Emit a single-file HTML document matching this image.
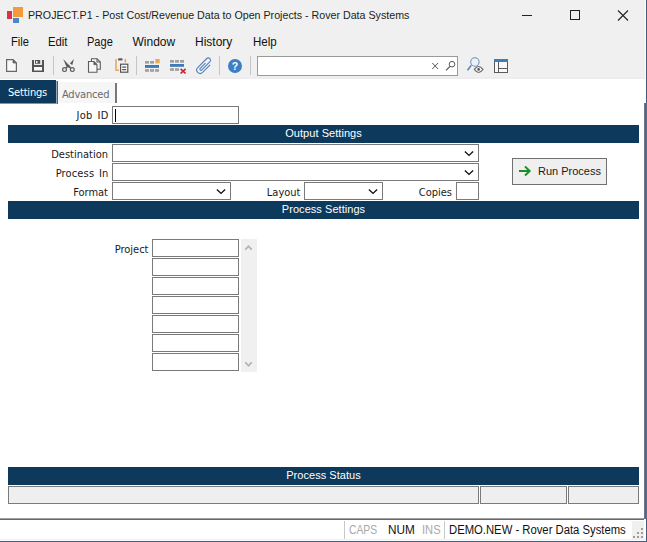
<!DOCTYPE html>
<html lang="en">
<head>
<meta charset="utf-8">
<title>PROJECT.P1 - Post Cost/Revenue Data to Open Projects - Rover Data Systems</title>
<style>
html,body{margin:0;padding:0;}
body{width:647px;height:542px;overflow:hidden;background:#fff;position:relative;font-family:"Liberation Sans",sans-serif;color:#1a1a1a;}
.abs,.t,.box,.bar,.sel,.sbox{position:absolute;box-sizing:border-box;}
.t{white-space:nowrap;line-height:1;transform-origin:0 0;}
#chrome{position:absolute;left:0;top:0;width:647px;height:77px;background:#f0f0f0;border-bottom:2px solid #ededed;}
.title{font-size:11.5px;left:27.6px;top:10px;color:#1c1c1c;transform:scaleX(0.928);}
.menu{font-size:12px;top:36px;color:#111;}
.bar{left:8px;width:631px;height:18px;background:#0d395c;color:#fff;font-size:11px;text-align:center;line-height:17px;letter-spacing:0.05px;}
.lbl{font-family:"DejaVu Sans Condensed","DejaVu Sans","Liberation Sans",sans-serif;font-size:11px;color:#1a1a1a;text-align:right;}
.box{border:1px solid #7a7a7a;background:#fff;}
.sbox{border:1px solid #7a7a7a;background:#efefef;height:18px;top:486px;}
.sel{border:1px solid #7a7a7a;background:#fff;height:18px;}
.sel svg{position:absolute;right:4.500px;top:5.700px;}
.status{font-size:12px;top:524px;color:#111;}
</style>
</head>
<body>
<!-- window chrome -->
<div id="chrome"></div>

<!-- app icon -->
<div class="abs" style="left:13px;top:7px;width:10px;height:10px;background:#f39a3d;"></div>
<div class="abs" style="left:7px;top:11px;width:5px;height:8px;background:#d8354a;"></div>
<div class="abs" style="left:13px;top:18px;width:6px;height:5px;background:#4a86c8;"></div>
<div class="t title">PROJECT.P1 - Post Cost/Revenue Data to Open Projects - Rover Data Systems</div>

<!-- window controls -->
<svg class="abs" style="left:515px;top:5px" width="125" height="22" viewBox="0 0 125 22">
  <path d="M7 10.5h10" stroke="#222" stroke-width="1" fill="none"/>
  <rect x="55.5" y="5.5" width="9" height="9" stroke="#222" stroke-width="1" fill="none"/>
  <path d="M103 5.5l10 10M113 5.5l-10 10" stroke="#222" stroke-width="1.1" fill="none"/>
</svg>

<!-- menu -->
<div class="t menu" style="left:11px;transform:scaleX(.93)">File</div>
<div class="t menu" style="left:48px;transform:scaleX(.94)">Edit</div>
<div class="t menu" style="left:87px;transform:scaleX(.92)">Page</div>
<div class="t menu" style="left:132.5px">Window</div>
<div class="t menu" style="left:195px">History</div>
<div class="t menu" style="left:252.5px;transform:scaleX(.96)">Help</div>

<!-- toolbar -->
<div class="abs" style="left:257px;top:56px;width:201px;height:20px;border:1px solid #9a9a9a;background:#fff;box-sizing:border-box;"></div>
<svg id="tb" class="abs" style="left:0;top:54px" width="647" height="25" viewBox="0 54 647 25">
  <!-- separators -->
  <g stroke="#c6c6c6" stroke-width="1">
    <path d="M53.5 56v19M136.5 56v19M219.5 56v19M250.5 56v19"/>
  </g>
  <!-- new -->
  <path d="M6.600 59.600h6.400l3.400 3.400v8.400h-9.800z" fill="#f8f8f8" stroke="#686868" stroke-width="1.200"/>
  <path d="M13 59.600v3.400h3.400z" fill="#686868" stroke="#686868" stroke-width="0.800"/>
  <!-- save -->
  <rect x="32" y="60" width="12" height="12" fill="#555"/>
  <rect x="34" y="60" width="8" height="5" fill="#ececec"/>
  <rect x="35" y="60" width="5.200" height="3.800" fill="#555"/>
  <rect x="36" y="61" width="1.500" height="2.200" fill="#f0f0f0"/>
  <rect x="34" y="67" width="8" height="3.500" fill="#fafafa"/>
  <!-- scissors -->
  <g fill="none" stroke="#5a5a5a" stroke-width="1.200">
    <circle cx="64.500" cy="69.600" r="1.900"/>
    <circle cx="72.300" cy="69.600" r="1.900"/>
    <path d="M69.300 65.200L66 68"/>
  </g>
  <path d="M63.200 58.900L71.200 67.600L70 68.200L66.300 66.600L65.200 63.800Z" fill="#5a5a5a"/>
  <path d="M73.900 58.900L72.300 64.900L69.900 63.600Z" fill="#5a5a5a"/>
  <!-- copy -->
  <g fill="#f6f6f6" stroke="#5c5c5c" stroke-width="1.100">
    <path d="M91.500 58.700h5.500l3.300 3.300v7.300h-8.800z"/>
    <path d="M97 58.700v3.300h3.300" fill="none"/>
    <path d="M88.500 61.500h5.300l3.200 3.200v7.500h-8.500z"/>
  </g>
  <path d="M93.800 61.500l3.200 3.200h-3.200z" fill="#5c5c5c" stroke="#5c5c5c" stroke-width="0.600"/>
  <!-- paste -->
  <path d="M116 59v11.300h3" fill="none" stroke="#e9a45a" stroke-width="1.500"/>
  <path d="M125.300 59v3.500" fill="none" stroke="#e9a45a" stroke-width="1.500"/>
  <rect x="118" y="58.200" width="4.600" height="2.400" rx="0.800" fill="#606060"/>
  <rect x="120.600" y="64.200" width="7.200" height="8" fill="#fcfcfc" stroke="#555" stroke-width="1.200"/>
  <path d="M122.200 67.100h4M122.200 69.600h4" stroke="#555" stroke-width="1.200"/>
  <!-- insert row -->
  <g fill="#a0a0a0">
    <rect x="145" y="61" width="4" height="2.600"/><rect x="150" y="61" width="4" height="2.600"/>
    <rect x="145" y="69.100" width="4" height="2.700"/><rect x="150" y="69.100" width="4" height="2.700"/><rect x="155" y="69.100" width="4" height="2.700"/>
  </g>
  <rect x="155.300" y="59" width="4.400" height="4.300" fill="#f0a850"/>
  <rect x="145" y="65" width="14" height="2.900" fill="#3d7ab6"/>
  <!-- delete row -->
  <g fill="#a0a0a0">
    <rect x="170" y="60" width="4" height="2.700"/><rect x="175" y="60" width="4" height="2.700"/><rect x="180" y="60" width="4" height="2.700"/>
    <rect x="170" y="68.200" width="4" height="2.700"/><rect x="175" y="68.200" width="4" height="2.700"/>
  </g>
  <rect x="170" y="64" width="14" height="2.800" fill="#3d7ab6"/>
  <path d="M180.600 68.800l5 4.700M185.600 68.800l-5 4.700" stroke="#c4243a" stroke-width="1.700" fill="none"/>
  <!-- paperclip -->
  <g transform="translate(204.300 65.800) rotate(-45)">
    <path d="M-5.900 3.400A3.400 3.400 0 0 1 -5.900 -3.400L6.900 -3.400A2.270 2.270 0 0 1 6.900 1.130L-5.900 3.400Z" fill="#edf3f9" stroke="none"/>
    <path d="M4.800 3.400L-5.900 3.400A3.400 3.400 0 0 1 -5.900 -3.400L6.900 -3.400A2.270 2.270 0 0 1 6.900 1.130L-4.700 1.130A1.130 1.130 0 0 1 -4.700 -1.130L2.800 -1.130" fill="none" stroke="#5681b3" stroke-width="1.100"/>
  </g>
  <!-- help -->
  <circle cx="235" cy="66" r="7" fill="#3d7ec4"/>
  <text x="235" y="69.800" text-anchor="middle" font-family="Liberation Sans, sans-serif" font-weight="bold" font-size="10.500" fill="#fff">?</text>
  <!-- search box icons -->
  <path d="M432.300 63l5.800 6M438.100 63l-5.800 6" stroke="#555" stroke-width="1" fill="none"/>
  <circle cx="452" cy="64.200" r="2.800" fill="none" stroke="#555" stroke-width="1"/>
  <path d="M450 66.300l-4 4" stroke="#555" stroke-width="1.200" fill="none"/>
  <!-- search eye -->
  <circle cx="474.900" cy="62" r="4.200" fill="none" stroke="#6690c4" stroke-width="1.050"/>
  <path d="M471.200 65.400l-3.700 4.900" stroke="#4f7fb8" stroke-width="1.500" fill="none"/>
  <path d="M474.300 69.400Q478.600 63.400 483 69.400Q478.600 75.400 474.300 69.400Z" fill="#f4f4f4" stroke="#686868" stroke-width="1.050"/>
  <circle cx="478.600" cy="69.400" r="1.300" fill="#555"/>
  <!-- layout -->
  <rect x="494.500" y="59.500" width="13" height="13" fill="#f8f8f8" stroke="#5a5a5a" stroke-width="1"/>
  <rect x="494" y="59" width="14" height="3" fill="#3f7db8"/>
  <path d="M498.500 62v10.500M498.500 68.500h9.500" stroke="#5a5a5a" stroke-width="1" fill="none"/>
</svg>

<!-- tabs -->
<div class="abs" style="left:0;top:80px;width:56px;height:23px;background:#0d395c;"></div>
<div class="abs" style="left:0;top:103px;width:56px;height:1px;background:#8094a8;"></div>
<div class="abs" style="left:56px;top:81px;width:1px;height:23px;background:#9aa7b5;"></div>
<div class="abs" style="left:57px;top:81px;width:1px;height:23px;background:#5c5c5c;"></div>
<div class="t lbl" style="left:8px;top:87px;color:#fff;text-align:left;letter-spacing:-0.2px;">Settings</div>
<div class="abs" style="left:58px;top:82px;width:57px;height:21px;background:#f6f6f6;"></div>
<div class="t lbl" style="left:62px;top:89px;color:#6a6a6a;text-align:left;letter-spacing:-0.2px;">Advanced</div>
<div class="abs" style="left:115px;top:83px;width:2px;height:20px;background:#787878;"></div>

<!-- Job ID -->
<div class="t lbl" style="left:39.500px;width:69px;top:110px;word-spacing:1.500px;letter-spacing:0.250px;">Job ID</div>
<div class="box" style="left:112px;top:106px;width:127px;height:18px;"></div>
<div class="abs" style="left:115px;top:109px;width:1px;height:13px;background:#000;"></div>

<!-- Output Settings -->
<div class="bar" style="top:125px;">Output Settings</div>
<div class="t lbl" style="left:19px;width:89px;top:149px;">Destination</div>
<div class="sel" style="left:112px;top:144px;width:367px;"><svg width="10" height="6" viewBox="0 0 10 6"><path d="M0.900 0.600L5 4.400L9.100 0.600" stroke="#111" stroke-width="1.400" fill="none"/></svg></div>
<div class="t lbl" style="left:19.500px;width:89px;top:168px;word-spacing:1.500px;letter-spacing:0.150px;">Process In</div>
<div class="sel" style="left:112px;top:163px;width:367px;"><svg width="10" height="6" viewBox="0 0 10 6"><path d="M0.900 0.600L5 4.400L9.100 0.600" stroke="#111" stroke-width="1.400" fill="none"/></svg></div>
<div class="t lbl" style="left:19px;width:89px;top:187px;">Format</div>
<div class="sel" style="left:112px;top:182px;width:119px;"><svg width="10" height="6" viewBox="0 0 10 6"><path d="M0.900 0.600L5 4.400L9.100 0.600" stroke="#111" stroke-width="1.400" fill="none"/></svg></div>
<div class="t lbl" style="left:239.500px;width:61px;top:187px;">Layout</div>
<div class="sel" style="left:304px;top:182px;width:79px;"><svg width="10" height="6" viewBox="0 0 10 6"><path d="M0.900 0.600L5 4.400L9.100 0.600" stroke="#111" stroke-width="1.400" fill="none"/></svg></div>
<div class="t lbl" style="left:399px;width:53px;top:187px;">Copies</div>
<div class="box" style="left:456px;top:182px;width:23px;height:18px;"></div>

<!-- Run Process button -->
<div class="abs" style="left:512px;top:158px;width:95px;height:27px;border:1px solid #707070;background:#efefef;"></div>
<svg class="abs" style="left:518px;top:165px" width="14" height="12" viewBox="0 0 14 12"><path d="M1 6h10.5M7 1.5L11.7 6L7 10.5" stroke="#17902b" stroke-width="1.9" fill="none"/></svg>
<div class="t" style="left:538px;top:166px;font-size:11px;color:#1a1a1a;">Run Process</div>

<!-- Process Settings -->
<div class="bar" style="top:201px;">Process Settings</div>
<div class="t lbl" style="left:79.500px;width:69px;top:244px;">Project</div>
<div class="box" style="left:152px;top:239px;width:87px;height:18px;"></div>
<div class="box" style="left:152px;top:258px;width:87px;height:18px;"></div>
<div class="box" style="left:152px;top:277px;width:87px;height:18px;"></div>
<div class="box" style="left:152px;top:296px;width:87px;height:18px;"></div>
<div class="box" style="left:152px;top:315px;width:87px;height:18px;"></div>
<div class="box" style="left:152px;top:334px;width:87px;height:18px;"></div>
<div class="box" style="left:152px;top:353px;width:87px;height:18px;"></div>
<div class="abs" style="left:241px;top:239px;width:16px;height:133px;background:#f0f0f0;"></div>
<svg class="abs" style="left:243px;top:243px" width="11" height="9" viewBox="0 0 11 9"><path d="M2.300 6.800L5.500 3.200L8.700 6.800" stroke="#b2b2b2" stroke-width="1.700" fill="none"/></svg>
<svg class="abs" style="left:243px;top:359px" width="11" height="9" viewBox="0 0 11 9"><path d="M2.300 3.200L5.500 6.800L8.700 3.200" stroke="#b2b2b2" stroke-width="1.700" fill="none"/></svg>

<!-- Process Status -->
<div class="bar" style="top:467px;">Process Status</div>
<div class="sbox" style="left:8px;width:471px;"></div>
<div class="sbox" style="left:480px;width:87px;"></div>
<div class="sbox" style="left:568px;width:71px;"></div>

<!-- status bar -->
<div class="abs" style="left:0;top:518px;width:644px;height:1px;background:#a0a0a0;"></div>
<div class="abs" style="left:0;top:519px;width:644px;height:1px;background:#696969;"></div>
<div class="abs" style="left:344px;top:521px;width:1px;height:18px;background:#c8c8c8;"></div>
<div class="abs" style="left:444px;top:521px;width:1px;height:18px;background:#c8c8c8;"></div>
<div class="t status" style="left:349px;color:#a8a8a8;transform:scaleX(.86)">CAPS</div>
<div class="t status" style="left:388px;transform:scaleX(.98)">NUM</div>
<div class="t status" style="left:422px;color:#a8a8a8;transform:scaleX(.93)">INS</div>
<div class="t status" style="left:449px;transform:scaleX(.94)">DEMO.NEW - Rover Data Systems</div>
<div class="abs" style="left:632px;top:521px;width:12px;height:19px;background:#f0f0f0;"></div>
<svg class="abs" style="left:632px;top:527px" width="12" height="12" viewBox="0 0 12 12" fill="#9c9c9c">
  <rect x="9" y="1" width="2" height="2"/>
  <rect x="5" y="5" width="2" height="2"/><rect x="9" y="5" width="2" height="2"/>
  <rect x="1" y="9" width="2" height="2"/><rect x="5" y="9" width="2" height="2"/><rect x="9" y="9" width="2" height="2"/>
</svg>

<!-- window right / bottom edges -->
<div class="abs" style="left:645px;top:0;width:1px;height:103px;background:#f3fdff;"></div>
<div class="abs" style="left:644px;top:103px;width:1px;height:416px;background:#6b7a82;"></div>
<div class="abs" style="left:645px;top:103px;width:1px;height:416px;background:#566879;"></div>
<div class="abs" style="left:646px;top:0;width:1px;height:542px;background:#455a82;"></div>
<div class="abs" style="left:646px;top:103px;width:1px;height:416px;background:#556a8e;"></div>
<div class="abs" style="left:0;top:539px;width:646px;height:1px;background:#ecf2f8;"></div>
<div class="abs" style="left:0;top:540px;width:646px;height:1px;background:#f8feff;"></div>
<div class="abs" style="left:0;top:541px;width:647px;height:1px;background:#4b5b7a;"></div>
</body>
</html>
